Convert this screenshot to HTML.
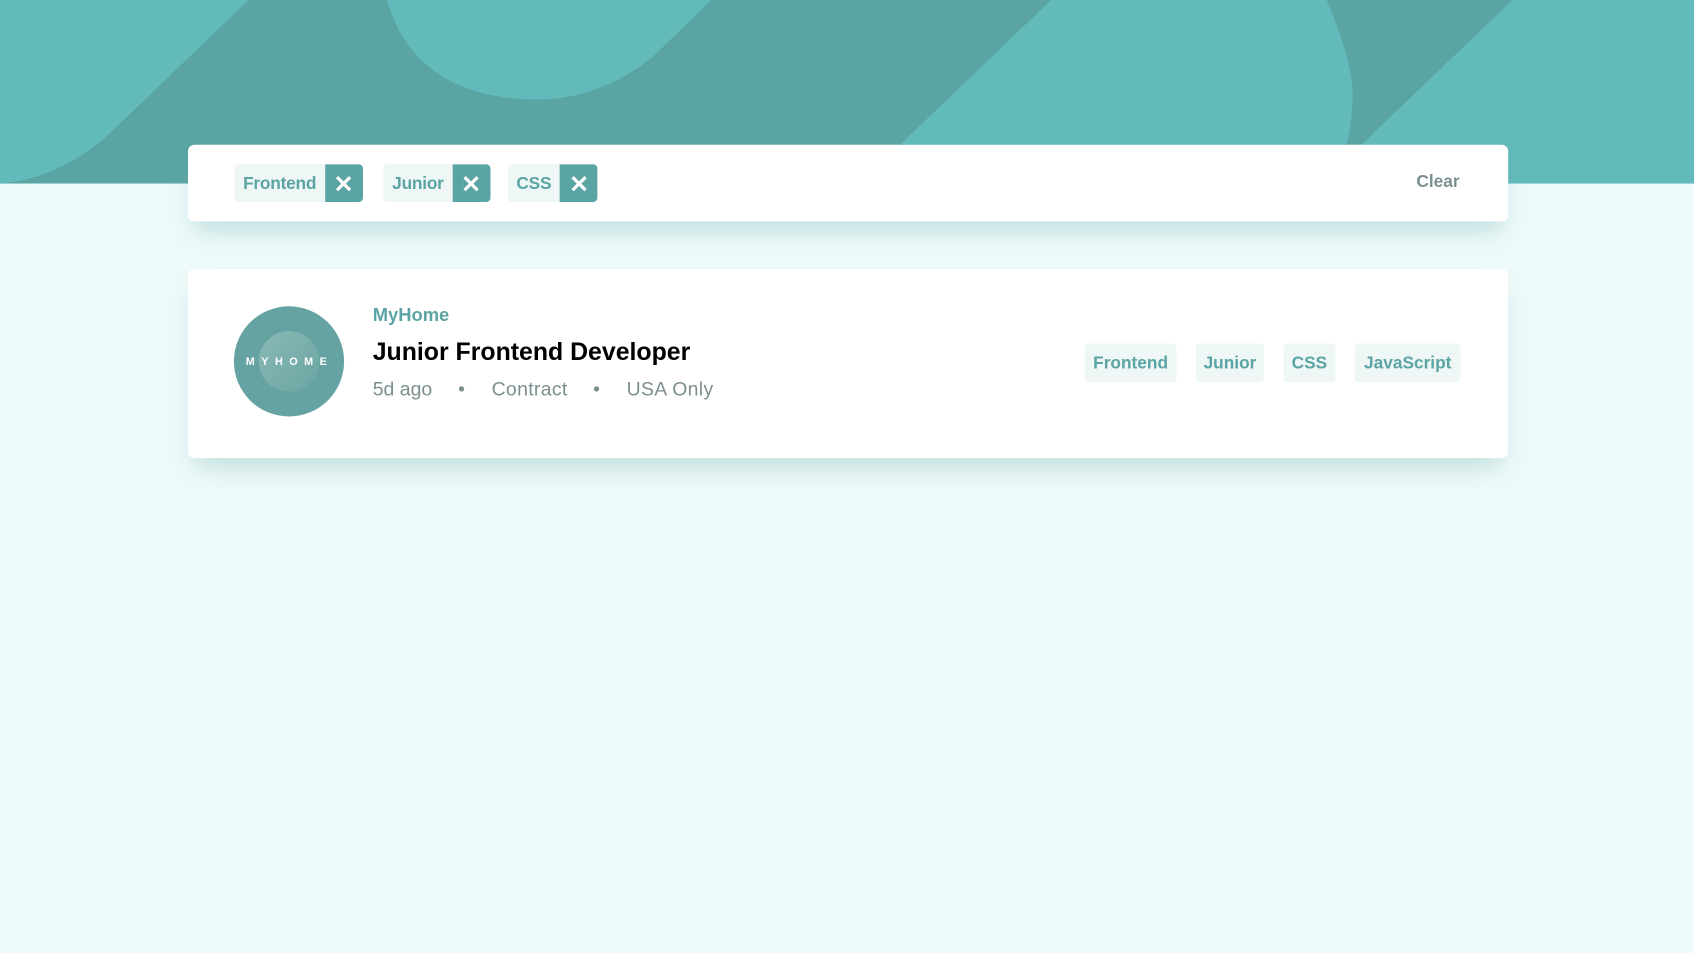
<!DOCTYPE html>
<html><head><meta charset="utf-8"><style>
html,body{margin:0;padding:0;width:1694px;height:953px;overflow:hidden;background:#effafa;font-family:"Liberation Sans",sans-serif}
#w{position:absolute;left:0;top:0;width:1568px;height:882px;transform:scale(1.08036);transform-origin:0 0}
.abs{position:absolute}
.card{position:absolute;background:#fff;border-radius:6px;box-shadow:0 14px 22px -6px rgba(91,164,164,.35)}
.chip{position:absolute;top:152px;height:35px;background:#eff6f6;border-radius:4px;overflow:hidden;display:flex;align-items:center}
.chip span{color:#5ba4a4;font-weight:bold;font-size:16px;padding:2px 8px 0;letter-spacing:-.2px}
.chip b{width:35px;height:35px;background:#5ba4a4;display:flex;align-items:center;justify-content:center}
.tag{position:absolute;top:318px;height:36px;background:#eff6f6;border-radius:4px;color:#5ba4a4;font-weight:bold;font-size:16px;line-height:38px;text-align:center}
.m{position:absolute;top:350px;color:#7c8f8f;font-size:18px;white-space:pre}
</style></head><body><div id="w">
<svg class="abs" style="left:0;top:0" width="1568" height="170" viewBox="0 0 1568 170">
<rect width="1568" height="170" fill="#5ba4a4"/>
<path d="M0 0H230L100 125Q55 165 0 170Z" fill="#63babb"/>
<path d="M358 0H658L605 52Q555 92 498 92Q385 92 358 0Z" fill="#63babb"/>
<path d="M973 0H1228Q1253 60 1252 90Q1250 130 1245 134H833Z" fill="#63babb"/>
<path d="M1400 0H1568V170H1222L1260 134Z" fill="#63babb"/>
</svg>
<div class="card" style="left:174px;top:134px;width:1222px;height:71px"></div>
<div class="chip" style="left:217px"><span>Frontend</span><b><svg width="16" height="16"><path d="M2 2L14 14M14 2L2 14" stroke="#fff" stroke-width="3"/></svg></b></div>
<div class="chip" style="left:355px"><span>Junior</span><b><svg width="16" height="16"><path d="M2 2L14 14M14 2L2 14" stroke="#fff" stroke-width="3"/></svg></b></div>
<div class="chip" style="left:470px"><span>CSS</span><b><svg width="16" height="16"><path d="M2 2L14 14M14 2L2 14" stroke="#fff" stroke-width="3"/></svg></b></div>
<div class="abs" style="left:1311px;top:160px;color:#7c8f8f;font-weight:bold;font-size:16px">Clear</div>
<div class="card" style="left:174px;top:249px;width:1222px;height:175px"></div>
<svg class="abs" style="left:216px;top:283px" width="103" height="103"><defs><linearGradient id="g" x1="0" y1="0" x2="1" y2="1"><stop offset="0" stop-color="#8ab9b6"/><stop offset="1" stop-color="#6aa5a3"/></linearGradient></defs><circle cx="51.5" cy="51.5" r="51" fill="#65a3a2"/><circle cx="51.5" cy="51.5" r="28" fill="url(#g)"/><text x="52" y="55" text-anchor="middle" fill="#fff" font-size="10" font-weight="bold" letter-spacing="6" font-family="Liberation Sans">MYHOME</text></svg>
<div class="abs" style="left:345px;top:282px;color:#5ba4a4;font-weight:bold;font-size:17px">MyHome</div>
<div class="abs" style="left:345px;top:312px;color:#000;font-weight:bold;font-size:23px">Junior Frontend Developer</div>
<div class="m" style="left:345px">5d ago</div>
<div class="m" style="left:424px">•</div>
<div class="m" style="left:455px;letter-spacing:.3px">Contract</div>
<div class="m" style="left:549px">•</div>
<div class="m" style="left:580px;letter-spacing:.3px">USA Only</div>
<div class="tag" style="left:1004px;width:85px">Frontend</div>
<div class="tag" style="left:1107px;width:63px">Junior</div>
<div class="tag" style="left:1188px;width:48px">CSS</div>
<div class="tag" style="left:1254px;width:98px">JavaScript</div>
</div></body></html>
